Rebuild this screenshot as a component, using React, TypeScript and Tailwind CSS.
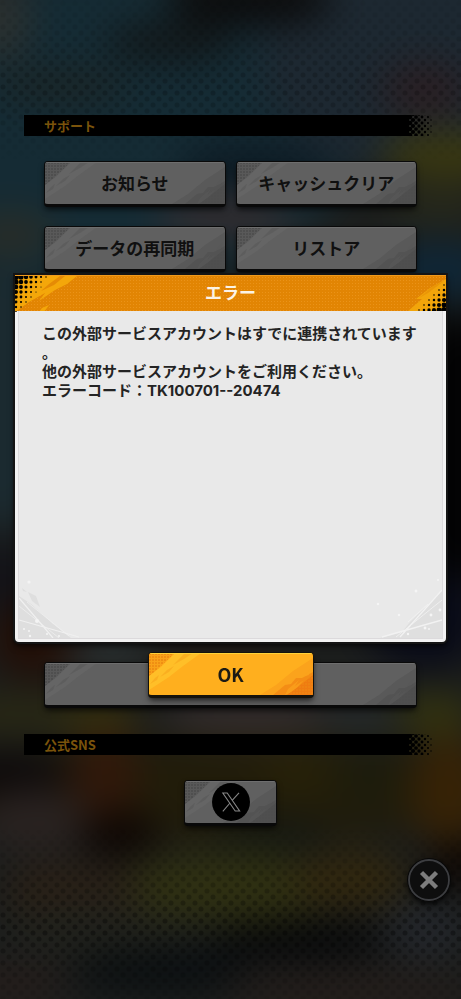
import { useId, useState } from "react";
import type { ReactNode } from "react";

interface Blob {
  x: number;
  y: number;
  rx: number;
  ry: number;
  color: string;
}

const blobs: Blob[] = [
  { x: 100, y: 130, rx: 260, ry: 160, color: "#152b34" },
  { x: 400, y: 60, rx: 140, ry: 110, color: "#1d2831" },
  { x: 0, y: 20, rx: 30, ry: 40, color: "#2b302f" },
  { x: 250, y: 0, rx: 85, ry: 28, color: "#0c0d0e" },
  { x: 170, y: 42, rx: 65, ry: 20, color: "#12181a" },
  { x: 60, y: 85, rx: 70, ry: 16, color: "#1a2425" },
  { x: 425, y: 90, rx: 45, ry: 28, color: "#291f23" },
  { x: 255, y: 165, rx: 80, ry: 22, color: "#0d1a23" },
  { x: 450, y: 155, rx: 70, ry: 24, color: "#3a3810" },
  { x: 225, y: 217, rx: 70, ry: 20, color: "#342c2e" },
  { x: 10, y: 235, rx: 45, ry: 22, color: "#292d27" },
  { x: 440, y: 205, rx: 50, ry: 20, color: "#26281b" },
  { x: 440, y: 270, rx: 60, ry: 30, color: "#0f2636" },
  { x: 0, y: 400, rx: 60, ry: 130, color: "#1b2a30" },
  { x: 461, y: 450, rx: 60, ry: 140, color: "#030304" },
  { x: 0, y: 580, rx: 40, ry: 40, color: "#131318" },
  { x: 35, y: 640, rx: 45, ry: 40, color: "#220f07" },
  { x: 110, y: 650, rx: 45, ry: 16, color: "#2d3334" },
  { x: 220, y: 650, rx: 60, ry: 14, color: "#251b18" },
  { x: 425, y: 620, rx: 60, ry: 50, color: "#090b18" },
  { x: 20, y: 715, rx: 70, ry: 20, color: "#292813" },
  { x: 100, y: 718, rx: 40, ry: 22, color: "#35300e" },
  { x: 250, y: 715, rx: 90, ry: 22, color: "#342d2d" },
  { x: 360, y: 715, rx: 40, ry: 18, color: "#272c2d" },
  { x: 435, y: 715, rx: 40, ry: 22, color: "#33330f" },
  { x: 230, y: 790, rx: 280, ry: 50, color: "#211c0a" },
  { x: 10, y: 775, rx: 60, ry: 24, color: "#0d0909" },
  { x: 105, y: 775, rx: 34, ry: 44, color: "#30180a" },
  { x: 35, y: 820, rx: 55, ry: 32, color: "#292220" },
  { x: 120, y: 835, rx: 40, ry: 24, color: "#0e0704" },
  { x: 300, y: 770, rx: 40, ry: 24, color: "#272108" },
  { x: 370, y: 780, rx: 40, ry: 30, color: "#1d1c0c" },
  { x: 450, y: 790, rx: 40, ry: 55, color: "#362206" },
  { x: 270, y: 835, rx: 60, ry: 18, color: "#151812" },
  { x: 230, y: 887, rx: 120, ry: 34, color: "#2f3012" },
  { x: 350, y: 880, rx: 60, ry: 28, color: "#31270e" },
  { x: 70, y: 890, rx: 70, ry: 26, color: "#2a2016" },
  { x: 90, y: 930, rx: 90, ry: 26, color: "#20211c" },
  { x: 461, y: 865, rx: 34, ry: 24, color: "#0d0704" },
  { x: 300, y: 940, rx: 90, ry: 20, color: "#08090a" },
  { x: 160, y: 970, rx: 90, ry: 22, color: "#0b0f11" },
  { x: 425, y: 930, rx: 42, ry: 28, color: "#23262b" },
  { x: 350, y: 992, rx: 130, ry: 20, color: "#241d1a" },
  { x: 10, y: 985, rx: 60, ry: 22, color: "#241d1b" },
];

function Backdrop() {
  return (
    <svg
      className="absolute inset-0 h-full w-full"
      viewBox="0 0 461 999"
      preserveAspectRatio="xMidYMid slice"
      aria-hidden="true"
    >
      <defs>
        <filter
          id="soft"
          x="-60"
          y="-60"
          width="581"
          height="1119"
          filterUnits="userSpaceOnUse"
          colorInterpolationFilters="sRGB"
        >
          <feGaussianBlur stdDeviation="18" />
        </filter>
        <pattern id="halftone" width="12" height="12" patternUnits="userSpaceOnUse">
          <circle cx="3" cy="3" r="2.5" fill="#000" />
          <circle cx="9" cy="9" r="2.5" fill="#000" />
        </pattern>
        <linearGradient id="fade" x1="0" y1="0" x2="0" y2="1">
          <stop offset="0" stopColor="#fff" stopOpacity="0.02" />
          <stop offset="0.09" stopColor="#fff" stopOpacity="0.2" />
          <stop offset="0.16" stopColor="#fff" stopOpacity="0" />
          <stop offset="0.83" stopColor="#fff" stopOpacity="0" />
          <stop offset="0.93" stopColor="#fff" stopOpacity="0.34" />
          <stop offset="1" stopColor="#fff" stopOpacity="0.05" />
        </linearGradient>
        <mask id="halftoneMask">
          <rect width="461" height="999" fill="url(#fade)" />
        </mask>
      </defs>
      <rect width="461" height="999" fill="#171a1b" />
      <g filter="url(#soft)">
        <rect x="-60" y="-60" width="581" height="1119" fill="#1b1d1c" />
        {blobs.map((b, i) => (
          <ellipse key={i} cx={b.x} cy={b.y} rx={b.rx} ry={b.ry} fill={b.color} />
        ))}
      </g>
      <rect width="461" height="999" fill="url(#halftone)" mask="url(#halftoneMask)" />
    </svg>
  );
}

function SectionTail() {
  const dots: ReactNode[] = [];
  for (let col = 0; col < 8; col++) {
    for (let row = 0; row < 5; row++) {
      const y = row * 6 + (col % 2 ? 0 : 3) - 1;
      dots.push(<circle key={`${col}-${row}`} cx={1 + col * 3} cy={y} r={2.3 - col * 0.22} />);
    }
  }
  return (
    <svg className="w-6 shrink-0" viewBox="0 0 24 21" aria-hidden="true">
      {dots}
    </svg>
  );
}

function SectionTitle({ children }: { children: ReactNode }) {
  return (
    <div className="mr-7 ml-6 flex h-[21px]">
      <h2 className="flex flex-1 items-center bg-black pl-5 text-[13px] leading-5 font-bold text-[#7a530b]">
        {children}
      </h2>
      <SectionTail />
    </div>
  );
}

interface CornerColors {
  leftDot: string;
  leftStroke: string;
  rightStroke: string;
  rightDeep: string;
}

const grayCorners: CornerColors = {
  leftDot: "#4c4c4c",
  leftStroke: "#656565",
  rightStroke: "#595959",
  rightDeep: "#4f4f4f",
};

const orangeCorners: CornerColors = {
  leftDot: "#ee8a12",
  leftStroke: "#ffbf28",
  rightStroke: "#fba31c",
  rightDeep: "#ef7c11",
};

// Brush strokes and halftone in two opposite corners of a button
function Corners({ colors }: { colors: CornerColors }) {
  const id = useId();
  return (
    <>
      <svg className="absolute top-0 left-0 h-full" viewBox="0 0 56 42" width="56" aria-hidden="true">
        <defs>
          <pattern id={`${id}a`} width="3" height="3" patternUnits="userSpaceOnUse">
            <rect width="2" height="2" fill={colors.leftDot} />
          </pattern>
        </defs>
        <path d="M0 0H26L0 24Z" fill={colors.leftDot} opacity="0.35" />
        <path d="M0 0H26L0 24Z" fill={`url(#${id}a)`} opacity="0.8" />
        <path d="M26 0H52L34 13L20 24L0 37V23L12 14Z" fill={colors.leftStroke} />
        <path
          d="M36 0H44L35 6L24 12L31 5ZM18 17L25 13L20 19L11 24ZM6 25L10 22L8 27L1 31Z"
          fill={colors.leftDot}
          opacity="0.3"
        />
      </svg>
      <svg className="absolute right-0 bottom-0 h-full" viewBox="0 0 56 42" width="56" aria-hidden="true">
        <defs>
          <pattern id={`${id}b`} width="3" height="3" patternUnits="userSpaceOnUse">
            <rect width="2" height="2" fill={colors.leftDot} />
          </pattern>
        </defs>
        <path d="M56 5V42H3L19 32L36 18Z" fill={colors.rightStroke} />
        <path d="M56 19V42H16L28 32L34 31L39 25L45 25Z" fill={colors.rightDeep} opacity="0.55" />
        <path
          d="M31 36L42 27L38 33L47 27L36 39L28 42ZM46 24L54 15L52 22Z"
          fill={colors.rightStroke}
          opacity="0.7"
        />
        <path d="M56 22V42H30L41 34Z" fill={colors.rightDeep} />
        <path d="M56 22V42H30L41 34Z" fill={`url(#${id}b)`} opacity="0.5" />
      </svg>
    </>
  );
}

interface MenuButtonProps {
  children?: ReactNode;
  label?: string;
  className?: string;
}

function MenuButton({ children, label, className = "" }: MenuButtonProps) {
  return (
    <button
      type="button"
      aria-label={label}
      className={`relative flex h-[46px] items-center justify-center overflow-hidden rounded-sm border border-b-[3px] border-[#090909] bg-[#606060] text-[17px] font-bold text-[#101010] shadow-md shadow-black/50 ${className}`}
    >
      <Corners colors={grayCorners} />
      <span className="absolute inset-x-0 top-0 h-px bg-[#6e6e6e]" />
      <span className="relative">{children}</span>
    </button>
  );
}

function XLogo() {
  return (
    <svg className="block h-[38px] w-[38px]" viewBox="0 0 38 38" fill="none" stroke="#858585" aria-hidden="true">
      <circle cx="19" cy="19" r="19" fill="#000" stroke="none" />
      <path d="M10.8 10H15.2L27.6 28H23.2Z" strokeWidth="1.1" />
      <path d="M27 9.8L20.2 17.3M18 20L10.8 28.3" strokeWidth="1.1" />
    </svg>
  );
}

function HeaderPattern() {
  const left: ReactNode[] = [];
  const right: ReactNode[] = [];
  for (let col = 0; col < 8; col++) {
    for (let row = 0; row < 8; row++) {
      const r = 2.9 - (col + row * 0.8) * 0.36;
      if (r > 0.5) {
        left.push(<circle key={`${col}-${row}`} cx={1 + col * 5} cy={1 + row * 5} r={r} />);
      }
      const r2 = 2.9 - (col + row) * 0.42;
      if (r2 > 0.5) {
        right.push(<circle key={`${col}-${row}`} cx={58 - col * 5} cy={35 - row * 5} r={r2} />);
      }
    }
  }
  return (
    <>
      <svg className="absolute inset-0 h-full w-full" aria-hidden="true">
        <defs>
          <pattern id="mesh" width="3" height="3" patternUnits="userSpaceOnUse">
            <rect x="1" y="1" width="1" height="1" fill="#f3a02e" />
          </pattern>
        </defs>
        <rect width="100%" height="100%" fill="url(#mesh)" opacity="0.5" />
      </svg>
      <svg className="absolute top-0 left-0" width="64" height="36" viewBox="0 0 64 36" aria-hidden="true">
        <path d="M0 0H62L52 8L40 14L24 25L30 17L14 26L0 36Z" fill="#f4a70a" />
        <path d="M45 0L34 8L26 15L39 9L50 0Z" fill="#e58b05" />
        <path d="M24 36L27 32L34 29L29 36Z" fill="#f4a70a" />
        {left}
      </svg>
      <svg className="absolute right-0 bottom-0" width="60" height="36" viewBox="0 0 60 36" aria-hidden="true">
        <path d="M60 4L44 13L30 24L36 24L22 36H60Z" fill="#f2a50a" />
        <path d="M58 6L42 18L33 23L46 12Z" fill="#e58b05" opacity="0.6" />
        {right}
      </svg>
    </>
  );
}

function BodyCorners() {
  return (
    <>
      <svg className="absolute bottom-0 left-0" width="64" height="60" viewBox="0 0 64 60" aria-hidden="true">
        <path d="M0 18L12 26L22 35L34 46L52 60H0Z" fill="#dedede" />
        <path d="M9 14L17 18L21 29L13 23ZM3 10L8 14L4 13Z" fill="#dedede" />
        <g stroke="#f0f0f0" fill="none">
          <path d="M0 20L34 60M0 42L60 59" strokeWidth="1.2" />
          <path d="M0 28L40 60M8 24L50 58" strokeWidth="0.7" />
        </g>
        <g fill="#f4f4f4">
          <circle cx="10" cy="4" r="1.6" />
          <circle cx="18" cy="43" r="2" />
          <circle cx="5" cy="51" r="1" />
          <circle cx="10" cy="53" r="1" />
          <circle cx="11" cy="58" r="1.2" />
          <circle cx="28" cy="56" r="1" />
          <circle cx="40" cy="58" r="1" />
        </g>
      </svg>
      <svg className="absolute right-0 bottom-0" width="70" height="62" viewBox="0 0 70 62" aria-hidden="true">
        <path d="M70 14L54 31L38 46L30 56L8 62H70Z" fill="#dfdfdf" />
        <g stroke="#f2f2f2" fill="none">
          <path d="M70 14L28 61M10 61L70 44" strokeWidth="1.3" />
          <path d="M70 24L24 61M56 28L36 46" strokeWidth="0.8" />
        </g>
        <g fill="#f5f5f5">
          <circle cx="44" cy="15" r="1.4" />
          <circle cx="66" cy="4" r="1" />
          <circle cx="6" cy="28" r="1.2" />
          <circle cx="27" cy="39" r="1.2" />
          <circle cx="59" cy="39" r="1.4" />
          <circle cx="68" cy="34" r="1.4" />
          <circle cx="53" cy="52" r="1.4" />
          <circle cx="57" cy="53" r="1" />
          <circle cx="36" cy="58" r="1.2" />
        </g>
      </svg>
    </>
  );
}

function ErrorDialog({ onClose }: { onClose: () => void }) {
  return (
    <div className="fixed inset-0 z-10 flex flex-col items-center justify-center px-[13px] pb-7">
      <div
        role="alertdialog"
        aria-labelledby="error-title"
        aria-describedby="error-message"
        className="flex min-h-[371px] w-full flex-col rounded-b-md border-2 border-[#141414] bg-[#f2f2f2] shadow-md shadow-black/50"
      >
        <header className="relative flex h-9 items-center justify-center border-t border-[#f09a1c] bg-[#e28503] pb-1">
          <HeaderPattern />
          <h1 id="error-title" className="relative text-[17px] leading-6 font-bold text-[#fbf3e6]">
            エラー
          </h1>
        </header>
        <div className="relative mx-[3px] mb-[3px] flex-1 border border-t-0 border-[#dcdadc] bg-[#e9e9e9] px-[23px] pt-3">
          <BodyCorners />
          <p
            id="error-message"
            className="relative text-[15px] leading-[19px] font-bold text-[#242424] [line-break:anywhere]"
          >
            この外部サービスアカウントはすでに連携されています。
            <br />
            他の外部サービスアカウントをご利用ください。
            <br />
            エラーコード：<span className="font-['Inter',sans-serif]">TK100701--20474</span>
          </p>
        </div>
      </div>
      <button
        type="button"
        onClick={onClose}
        className="relative mt-2 flex h-[46px] w-[166px] items-center justify-center overflow-hidden rounded-sm border border-b-[3px] border-[#15120c] bg-[#ffaf1e] text-lg font-bold text-[#1c1a14] shadow-md shadow-black/50"
      >
        <Corners colors={orangeCorners} />
        <span className="absolute inset-x-0 top-0 h-px bg-[#ffd23a]" />
        <span className="relative">OK</span>
      </button>
    </div>
  );
}

export default function App() {
  const [showError, setShowError] = useState(true);

  return (
    <div className="relative min-h-screen overflow-hidden bg-[#171a1b] font-['Noto_Sans_CJK_JP','Noto_Sans',sans-serif]">
      <Backdrop />
      <main className="relative flex min-h-screen flex-col pt-[115px] pb-[173px]">
        <SectionTitle>サポート</SectionTitle>
        <div className="mt-[25px] grid grid-cols-2 gap-x-2.5 gap-y-[19px] px-11">
          <MenuButton>お知らせ</MenuButton>
          <MenuButton>キャッシュクリア</MenuButton>
          <MenuButton>データの再同期</MenuButton>
          <MenuButton>リストア</MenuButton>
        </div>
        <div className="mt-auto mb-[26px] flex flex-col px-11">
          <MenuButton label="メニュー" />
        </div>
        <SectionTitle>公式SNS</SectionTitle>
        <div className="mt-[25px] flex justify-center">
          <MenuButton label="X" className="w-[93px]">
            <XLogo />
          </MenuButton>
        </div>
      </main>
      <button
        type="button"
        aria-label="閉じる"
        className="absolute right-2.5 bottom-[97px] rounded-full shadow-md shadow-black/60"
      >
        <svg className="block h-11 w-11" viewBox="0 0 44 44" aria-hidden="true">
          <circle cx="22" cy="22" r="22" fill="#080808" />
          <circle cx="22" cy="22" r="20" fill="#0e0e0e" stroke="#3c3d40" strokeWidth="1.8" />
          <path d="M14.5 14.5L29.5 29.5M29.5 14.5L14.5 29.5" stroke="#7c7c7c" strokeWidth="4.4" />
        </svg>
      </button>
      {showError && <ErrorDialog onClose={() => setShowError(false)} />}
    </div>
  );
}
